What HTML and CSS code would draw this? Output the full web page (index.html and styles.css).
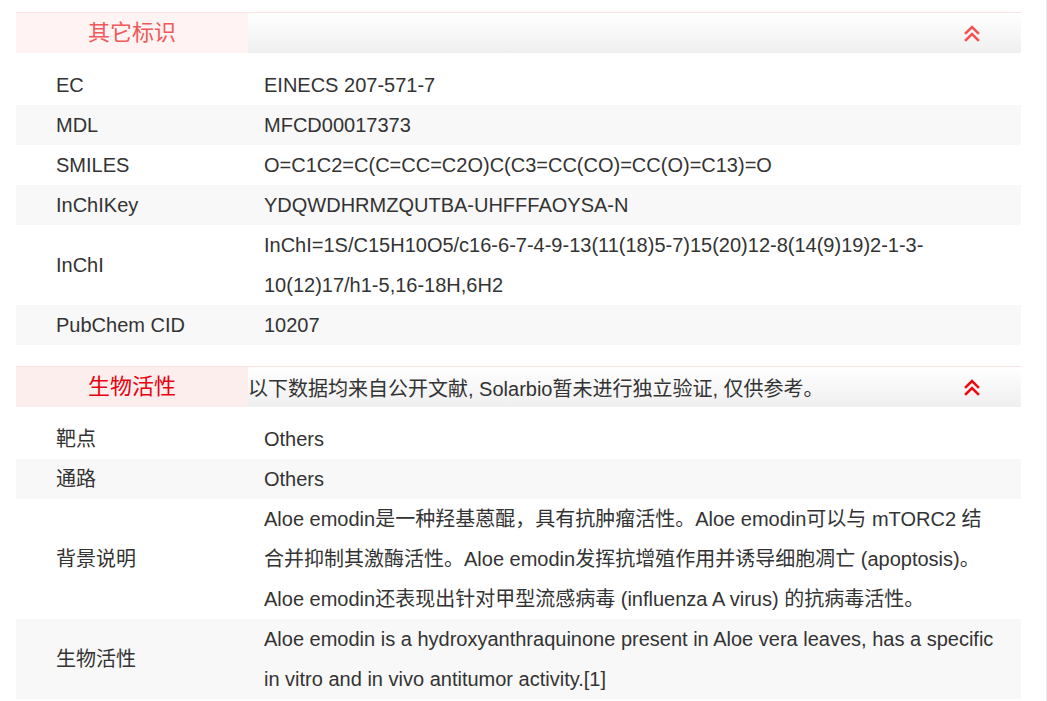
FILE: index.html
```html
<!DOCTYPE html>
<html lang="zh-CN">
<head>
<meta charset="utf-8">
<title>Aloe emodin</title>
<link rel="stylesheet" href="styles.css">
</head>
<body>
<div class="page">
  <section class="block">
    <div class="block-head">
      <div class="head-title soft">其它标识</div>
      <div class="head-note"></div>
      <svg class="chev soft-icon" viewBox="0 0 16 18" width="16" height="18"><polyline points="2,9 8,3 14,9"/><polyline points="2,16 8,10 14,16"/></svg>
    </div>
    <div class="rows">
      <div class="row"><div class="k">EC</div><div class="v">EINECS 207-571-7</div></div>
      <div class="row"><div class="k">MDL</div><div class="v">MFCD00017373</div></div>
      <div class="row"><div class="k">SMILES</div><div class="v">O=C1C2=C(C=CC=C2O)C(C3=CC(CO)=CC(O)=C13)=O</div></div>
      <div class="row"><div class="k">InChIKey</div><div class="v">YDQWDHRMZQUTBA-UHFFFAOYSA-N</div></div>
      <div class="row"><div class="k">InChI</div><div class="v">InChI=1S/C15H10O5/c16-6-7-4-9-13(11(18)5-7)15(20)12-8(14(9)19)2-1-3-10(12)17/h1-5,16-18H,6H2</div></div>
      <div class="row"><div class="k">PubChem CID</div><div class="v">10207</div></div>
    </div>
  </section>
  <section class="block">
    <div class="block-head">
      <div class="head-title strong">生物活性</div>
      <div class="head-note">以下数据均来自公开文献, Solarbio暂未进行独立验证, 仅供参考。</div>
      <svg class="chev strong-icon" viewBox="0 0 16 18" width="16" height="18"><polyline points="2,9 8,3 14,9"/><polyline points="2,16 8,10 14,16"/></svg>
    </div>
    <div class="rows">
      <div class="row"><div class="k">靶点</div><div class="v">Others</div></div>
      <div class="row"><div class="k">通路</div><div class="v">Others</div></div>
      <div class="row"><div class="k">背景说明</div><div class="v">Aloe emodin是一种羟基蒽醌，具有抗肿瘤活性。Aloe emodin可以与 mTORC2 结合并抑制其激酶活性。Aloe emodin发挥抗增殖作用并诱导细胞凋亡 (apoptosis)。Aloe emodin还表现出针对甲型流感病毒 (influenza A virus) 的抗病毒活性。</div></div>
      <div class="row"><div class="k">生物活性</div><div class="v">Aloe emodin is a hydroxyanthraquinone present in Aloe vera leaves, has a specific in vitro and in vivo antitumor activity.[1]</div></div>
    </div>
  </section>
</div>
</body>
</html>
```

FILE: styles.css
```css
html, body {
  margin: 0;
  padding: 0;
  background: #fff;
}
body {
  font-family: "Liberation Sans", "Noto Sans CJK SC", sans-serif;
  color: #333;
  font-size: 20px;
  border-right: 1px solid #ebe9f1;
  min-height: 701px;
  box-sizing: border-box;
}
.page {
  width: 1005px;
  margin-left: 16px;
  padding-top: 12px;
}
.block {
  margin-bottom: 21px;
}
.block-head {
  display: flex;
  align-items: center;
  height: 40px;
  border-top: 1px solid #fde3e3;
  background: linear-gradient(#ffffff, #efefef);
}
.head-title {
  width: 232px;
  height: 40px;
  line-height: 40px;
  text-align: center;
  font-size: 22px;
  flex: none;
}
.head-title.soft {
  background: #fff3f3;
  color: #f05a5a;
}
.head-title.strong {
  background: #fdeeee;
  color: #e8000f;
}
.head-note {
  flex: 1;
  font-size: 20px;
  color: #333;
  white-space: nowrap;
}
.chev {
  flex: none;
  margin-right: 41px;
  fill: none;
  stroke-width: 2.6;
  stroke-linecap: square;
}
.soft-icon { stroke: #f05454; }
.strong-icon { stroke: #ee0a14; }
.rows {
  padding-top: 12px;
}
.row {
  display: grid;
  grid-template-columns: 232px 1fr;
  align-items: center;
  line-height: 40px;
}
.row:nth-child(even) {
  background: #f8f8f8;
}
.k {
  padding-left: 40px;
}
.v {
  padding-left: 16px;
  padding-right: 24px;
}
```
